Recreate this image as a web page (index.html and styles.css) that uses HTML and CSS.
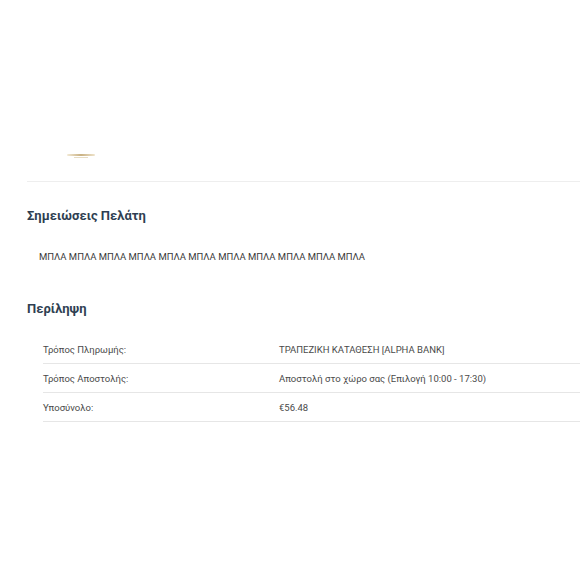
FILE: index.html
```html
<!DOCTYPE html>
<html lang="el">
<head>
<meta charset="utf-8">
<link rel="stylesheet" href="styles.css">
</head>
<body>
<header class="top">
  <div class="logo"><span class="logo-bar"></span><span class="logo-sub"></span></div>
</header>
<main class="content">
  <section class="block">
    <h2 class="title">Σημειώσεις Πελάτη</h2>
    <p class="notes">ΜΠΛΑ ΜΠΛΑ ΜΠΛΑ ΜΠΛΑ ΜΠΛΑ ΜΠΛΑ ΜΠΛΑ ΜΠΛΑ ΜΠΛΑ ΜΠΛΑ ΜΠΛΑ</p>
  </section>
  <section class="block">
    <h2 class="title">Περίληψη</h2>
    <div class="summary">
      <div class="row"><span class="label">Τρόπος Πληρωμής:</span><span class="value">ΤΡΑΠΕΖΙΚΗ ΚΑΤΑΘΕΣΗ [ALPHA BANK]</span></div>
      <div class="row"><span class="label">Τρόπος Αποστολής:</span><span class="value">Αποστολή στο χώρο σας (Επιλογή 10:00 - 17:30)</span></div>
      <div class="row"><span class="label">Υποσύνολο:</span><span class="value">€56.48</span></div>
    </div>
  </section>
</main>
</body>
</html>
```
FILE: styles.css
```css
html, body { margin: 0; padding: 0; background: #fff; }
body { font-family: Roboto, "Noto Sans", sans-serif; color: #444; }
.top { height: 181px; margin-left: 27px; border-bottom: 1px solid #eeeeee; position: relative; }
.logo { position: absolute; left: 40px; top: 154px; width: 28px; height: 6px; }
.logo-bar { display: block; width: 28px; height: 2px; background: linear-gradient(90deg, #f3ead6, #c9b183 50%, #efe4cc); border-radius: 1px; }
.logo-sub { display: block; margin: 1px 0 0 7px; width: 14px; height: 1px; background: #e6dcc4; }
.content { padding-left: 27px; }
.block { margin: 0; }
.title { margin: 0; font-size: 13px; font-weight: 700; color: #2f3f52; line-height: 16px; }
.block:first-child .title { padding-top: 26px; }
.notes { margin: 27px 0 0 12px; font-size: 9.5px; line-height: 12px; color: #3a3a3a; }
.block + .block .title { padding-top: 38px; }
.summary { margin: 18px 0 0 16px; }
.row { display: grid; grid-template-columns: 236px 1fr; height: 28px; align-items: center; border-bottom: 1px solid #e6e6e6; font-size: 9.5px; color: #4a4a4a; }
```
